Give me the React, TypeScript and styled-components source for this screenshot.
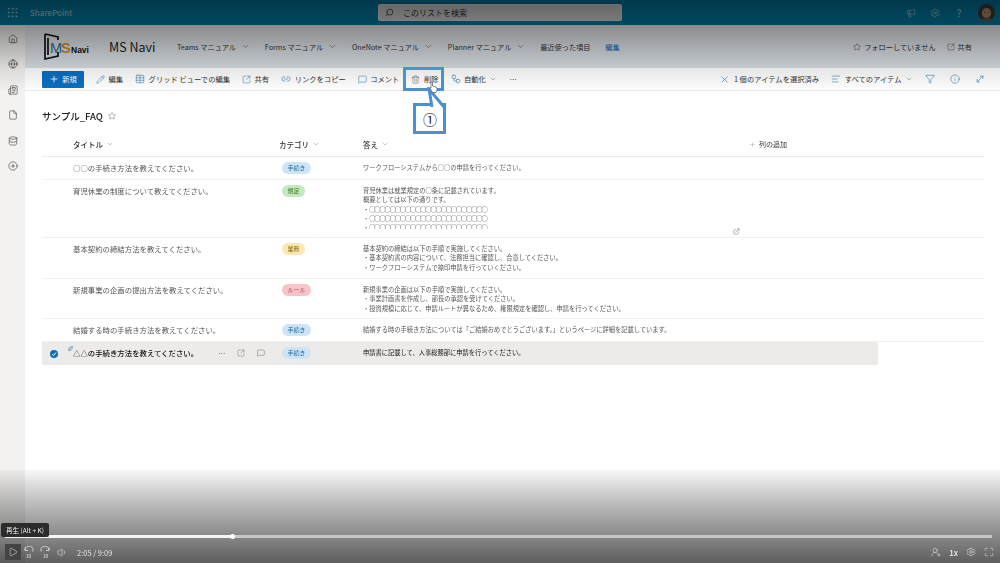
import styled, { createGlobalStyle } from "styled-components";
import {
  AlignLeft,
  ChevronDown,
  CirclePlus,
  Database,
  ExternalLink,
  File,
  Filter,
  Globe,
  Grip,
  Home,
  Info,
  Link2,
  Maximize,
  Megaphone,
  MessageSquare,
  MoveDiagonal,
  Newspaper,
  Pencil,
  Play,
  Plus,
  Search,
  Settings,
  Sparkles,
  SquareArrowOutUpRight,
  Star,
  Table,
  Trash2,
  UserRoundPlus,
  Volume1,
  Workflow,
  X,
} from "lucide-react";
import type { ReactNode } from "react";

const fonts = `"Noto Sans CJK JP", "Noto Sans", "Liberation Sans", sans-serif`;

const GlobalStyle = createGlobalStyle`
  html, body {
    margin: 0;
    width: 1000px;
    height: 563px;
    overflow: hidden;
    background: #fff;
  }
  body {
    font-family: ${fonts};
  }
`;

const Page = styled.div`
  position: relative;
  width: 1000px;
  height: 563px;
  overflow: hidden;
  display: flex;
  flex-direction: column;
  filter: blur(0.3px);
`;

const SuiteBar = styled.header`
  height: 25px;
  flex: none;
  display: flex;
  align-items: center;
  padding: 0 5px 0 6px;
  background: #037ca6;
  color: #b4d6e0;
`;

const BrandName = styled.span`
  margin-left: 11px;
  font-size: 8px;
  font-weight: 500;
  color: #93c8d6;
`;

const SearchBox = styled.div`
  position: absolute;
  left: 378px;
  top: 4px;
  width: 244px;
  height: 17px;
  box-sizing: border-box;
  display: flex;
  align-items: center;
  gap: 9px;
  padding-left: 6px;
  background: #d8d8d8;
  border: 1px solid #e4e4e4;
  border-radius: 2px;
  font-size: 8px;
  color: #333;
`;

const SearchIcon = styled(Search)`
  transform: scaleX(-1);
`;

const SuiteIcons = styled.div`
  margin-left: auto;
  display: flex;
  align-items: center;
  gap: 14px;
`;

const Question = styled.span`
  font-size: 10px;
  width: 10px;
  text-align: center;
`;

const Body = styled.div`
  flex: 1;
  display: flex;
  min-height: 0;
`;

const Rail = styled.nav`
  width: 25px;
  flex: none;
  display: flex;
  flex-direction: column;
  align-items: center;
  gap: 15.6px;
  padding-top: 8.5px;
  background: #f3f2f1;
  color: #444;
`;

const Main = styled.main`
  flex: 1;
  min-width: 0;
`;

const SiteHeader = styled.div`
  height: 43px;
  display: flex;
  align-items: center;
  padding: 0 28px 0 19px;
  background: linear-gradient(#e9ecf0, #dae0e6);
`;

const SiteName = styled.span`
  margin-left: 16px;
  width: 68px;
  font-size: 12.5px;
  color: #222;
`;

const SiteNav = styled.div`
  display: flex;
  align-items: center;
  gap: 14.8px;
  font-size: 7.2px;
  color: #333;
`;

const NavLink = styled.span<{ $accent?: boolean }>`
  display: flex;
  align-items: center;
  gap: 5px;
  white-space: nowrap;
  color: ${(p) => (p.$accent ? "#0f6cbd" : "inherit")};
`;

const SiteActions = styled.div`
  margin-left: auto;
  display: flex;
  align-items: center;
  gap: 11px;
  font-size: 7.2px;
  color: #333;
`;

const SiteAction = styled.span`
  display: flex;
  align-items: center;
  gap: 3px;
`;

const CommandBar = styled.div`
  height: 23px;
  box-sizing: border-box;
  display: flex;
  align-items: center;
  gap: 12px;
  padding: 0 15px 0 17px;
  background: #fff;
  border-bottom: 1px solid #edebe9;
  font-size: 7.3px;
  color: #333;
`;

const NewButton = styled.button`
  width: 42px;
  height: 17px;
  display: flex;
  align-items: center;
  justify-content: center;
  gap: 3px;
  padding: 0;
  border: 0;
  border-radius: 1px;
  background: #0a6fc2;
  color: #fff;
  font: inherit;
`;

const Command = styled.span`
  position: relative;
  display: flex;
  align-items: center;
  gap: 3.5px;
  white-space: nowrap;
  svg {
    color: #1b6fa8;
    flex: none;
  }
`;

const MutedCommand = styled(Command)`
  svg {
    color: #555;
  }
`;

const CommandGroup = styled.div`
  margin-left: auto;
  display: flex;
  align-items: center;
  gap: 12px;
`;

const IconGroup = styled.div`
  display: flex;
  align-items: center;
  gap: 15px;
  color: #1b6fa8;
`;

const Highlight = styled.span`
  position: absolute;
  z-index: 30;
  left: -8px;
  top: -7px;
  width: 41px;
  height: 24px;
  box-sizing: border-box;
  border: 3px solid #4a90d2;
`;

const CalloutTail = styled.svg`
  position: absolute;
  z-index: 31;
  left: 14px;
  top: 13px;
  width: 24px;
  height: 21px;
`;

const CalloutLabel = styled.span`
  position: absolute;
  z-index: 30;
  left: 2px;
  top: 29px;
  width: 33px;
  height: 31px;
  box-sizing: border-box;
  display: flex;
  align-items: center;
  justify-content: center;
  border: 3px solid #4a90d2;
  background: #fff;
  font-size: 14px;
  color: #222;
`;

const Cursor = styled.svg`
  position: absolute;
  z-index: 32;
  left: 18px;
  top: 7px;
  width: 9px;
  height: 12px;
`;

const Content = styled.section`
  padding: 16px 16px 0 17px;
`;

const ListTitle = styled.h1`
  display: flex;
  align-items: center;
  gap: 5px;
  height: 18px;
  margin: 0 0 8px;
  font-size: 9.5px;
  font-weight: 500;
  color: #222;
  svg {
    color: #555;
  }
`;

const HeaderRow = styled.div`
  height: 24px;
  box-sizing: border-box;
  padding-bottom: 1px;
  display: grid;
  grid-template-columns: 31px 206px 84px 386px 1fr;
  align-items: center;
  border-bottom: 1px solid #edebe9;
  font-size: 7.5px;
  font-weight: 500;
  color: #333;
`;

const HeaderCell = styled.span`
  display: flex;
  align-items: center;
  gap: 3px;
  svg {
    color: #777;
  }
`;

const AddColumn = styled(HeaderCell)`
  font-weight: 400;
  font-size: 7px;
`;

const Row = styled.div<{ $height: number; $selected?: boolean }>`
  position: relative;
  height: ${(p) => p.$height}px;
  box-sizing: border-box;
  width: ${(p) => (p.$selected ? "836px" : "100%")};
  display: grid;
  grid-template-columns: 31px 206px 84px 378px;
  border-bottom: 1px solid ${(p) => (p.$selected ? "#ecebe9" : "#f3f2f1")};
  background: ${(p) => (p.$selected ? "#ecebe9" : "transparent")};
  color: ${(p) => (p.$selected ? "#111" : "#555")};
`;

const CheckCell = styled.div`
  display: flex;
  align-items: center;
  justify-content: flex-start;
  padding-left: 8px;
  height: 23px;
`;

const CheckDot = styled.span`
  width: 8px;
  height: 8px;
  border-radius: 50%;
  background: #0f6cbd;
  display: flex;
  align-items: center;
  justify-content: center;
`;

const TitleCell = styled.div<{ $selected?: boolean }>`
  position: relative;
  display: flex;
  align-items: flex-start;
  padding-top: 4.5px;
  font-size: 7.4px;
  line-height: 11px;
  font-weight: ${(p) => (p.$selected ? 500 : 400)};
`;

const Spark = styled.span`
  position: absolute;
  display: flex;
  left: -5px;
  top: 4px;
  color: #1b6fa8;
`;

const RowActions = styled.div`
  position: absolute;
  left: 145px;
  top: 5px;
  display: flex;
  align-items: center;
  gap: 12px;
  color: #555;
`;

const ChipCell = styled.div`
  display: flex;
  align-items: flex-start;
  padding: 5px 0 0 3px;
`;

const Chip = styled.span<{ $bg: string; $fg: string }>`
  height: 12px;
  line-height: 12px;
  padding: 0 5.5px;
  border-radius: 6px;
  font-size: 6px;
  background: ${(p) => p.$bg};
  color: ${(p) => p.$fg};
`;

const AnswerCell = styled.div`
  position: relative;
  margin-top: 5.7px;
  max-height: 43.5px;
  overflow: hidden;
  font-size: 6.25px;
  line-height: 9.4px;
  white-space: pre;
`;

const Circles = styled.span`
  letter-spacing: -1.15px;
`;

const OpenLink = styled.span`
  position: absolute;
  display: flex;
  left: 691px;
  top: 48px;
  color: #888;
`;

const ShadeTop = styled.div`
  position: absolute;
  z-index: 20;
  left: 0;
  right: 0;
  top: 0;
  height: 92px;
  pointer-events: none;
  background: linear-gradient(
    rgba(0, 0, 0, 0.55),
    rgba(0, 0, 0, 0.42) 27%,
    rgba(0, 0, 0, 0.1) 74%,
    rgba(0, 0, 0, 0)
  );
`;

const ShadeBottom = styled.div`
  position: absolute;
  z-index: 20;
  left: 0;
  right: 0;
  bottom: 0;
  height: 93px;
  pointer-events: none;
  background: linear-gradient(
    rgba(0, 0, 0, 0.03),
    rgba(0, 0, 0, 0.24) 32%,
    rgba(0, 0, 0, 0.46) 70%,
    rgba(0, 0, 0, 0.63)
  );
`;

const Player = styled.div`
  position: absolute;
  z-index: 40;
  left: 0;
  right: 0;
  bottom: 0;
  height: 28px;
  color: #e0e0e0;
`;

const Track = styled.div`
  position: absolute;
  left: 5px;
  right: 8px;
  top: 0;
  height: 3px;
  background: #c8c8c8;
`;

const Played = styled.div`
  position: absolute;
  left: 0;
  top: 0;
  height: 100%;
  background: #f4f4f4;
`;

const Thumb = styled.span`
  position: absolute;
  right: -2.5px;
  top: -1px;
  width: 5px;
  height: 5px;
  border-radius: 50%;
  background: #fff;
`;

const Tip = styled.span`
  position: absolute;
  left: 1px;
  top: -12px;
  width: 48px;
  height: 14px;
  display: flex;
  align-items: center;
  justify-content: center;
  border-radius: 2px;
  background: #2b2b2b;
  font-size: 6.5px;
  color: #f0f0f0;
`;

const Controls = styled.div`
  height: 100%;
  box-sizing: border-box;
  display: flex;
  align-items: center;
  padding: 6px 6px 0 5px;
  gap: 6px;
`;

const PlayButton = styled.span`
  width: 16px;
  height: 16px;
  margin-right: -4px;
  display: flex;
  align-items: center;
  justify-content: center;
  background: #444;
`;

const Time = styled.span`
  margin-left: 3px;
  font-size: 7.5px;
`;

const ControlsRight = styled.div`
  margin-left: auto;
  display: flex;
  align-items: center;
  gap: 8px;
  font-size: 7.5px;
  font-weight: 700;
`;

type Item = {
  title: string;
  chip: keyof typeof chips;
  answer: ReactNode;
  height: number;
};

const chips = {
  手続き: { bg: "#cfe4f6", fg: "#1a6a9c" },
  規定: { bg: "#c4e8c0", fg: "#3d7a2a" },
  業務: { bg: "#fde7b0", fg: "#8a6d1a" },
  ルール: { bg: "#f9c3c8", fg: "#a8434d" },
};

const circles = "○".repeat(23);

const items: Item[] = [
  {
    title: "○○の手続き方法を教えてください。",
    chip: "手続き",
    answer: "ワークフローシステムから○○の申請を行ってください。",
    height: 23,
  },
  {
    title: "育児休業の制度について教えてください。",
    chip: "規定",
    answer: (
      <>
        {"育児休業は就業規定の○条に記載されています。\n概要としては以下の通りです。\n"}
        ・<Circles>{circles}</Circles>
        {"\n"}・<Circles>{circles}</Circles>
        {"\n"}・<Circles>{circles}</Circles>
      </>
    ),
    height: 58,
  },
  {
    title: "基本契約の締結方法を教えてください。",
    chip: "業務",
    answer:
      "基本契約の締結は以下の手順で実施してください。\n・基本契約書の内容について、法務担当に確認し、合意してください。\n・ワークフローシステムで捺印申請を行っていください。",
    height: 41,
  },
  {
    title: "新規事業の企画の提出方法を教えてください。",
    chip: "ルール",
    answer:
      "新規事業の企画は以下の手順で実施してください。\n・事業計画書を作成し、部長の承認を受けてください。\n・投資規模に応じて、申請ルートが異なるため、権限規定を確認し、申請を行ってください。",
    height: 40,
  },
  {
    title: "結婚する時の手続き方法を教えてください。",
    chip: "手続き",
    answer:
      "結婚する時の手続き方法については「ご結婚おめでとうございます。」というページに詳細を記載しています。",
    height: 23,
  },
];

function Logo() {
  return (
    <svg width="49" height="29" viewBox="0 0 49 29">
      <path
        d="M1 2 L14 5 V8 M1 2 V27 L14 24 V20 M4 6 V23"
        fill="none"
        stroke="#111"
        strokeWidth="1.7"
      />
      <text x="6" y="21" fontSize="14.5" fontFamily="Liberation Sans" fill="#2a6d94">
        M
      </text>
      <text x="17" y="21" fontSize="14.5" fontWeight="700" fontFamily="Liberation Sans" fill="#d98a2b">
        S
      </text>
      <text x="27" y="21" fontSize="8.5" fontWeight="700" fontFamily="Liberation Sans" fill="#111">
        Navi
      </text>
    </svg>
  );
}

function Avatar() {
  return (
    <svg width="17" height="17" viewBox="0 0 17 17">
      <circle cx="8.5" cy="8.5" r="8.5" fill="#3e3a36" />
      <ellipse cx="8.5" cy="9" rx="4.6" ry="5" fill="#b58f73" />
      <circle cx="6.6" cy="8.5" r="0.6" fill="#332" />
      <circle cx="10.4" cy="8.5" r="0.6" fill="#332" />
      <path d="M3 16 Q8.5 11 14 16 L12 17 H5 Z" fill="#6b5a4c" />
    </svg>
  );
}

// 10 second skip button, the arc flips for forward
function SeekIcon({ forward }: { forward?: boolean }) {
  return (
    <svg width="11" height="12" viewBox="0 0 11 12">
      <g transform={forward ? "translate(11 0) scale(-1 1)" : undefined}>
        <path d="M2 1.5 V4.5 H5 M2.2 4.2 A4 3.6 0 1 1 9.6 5.6" fill="none" stroke="currentColor" strokeWidth="0.8" />
      </g>
      <text x="5.5" y="11.5" fontSize="5" textAnchor="middle" fill="currentColor">
        10
      </text>
    </svg>
  );
}

function ListRow({ item }: { item: Item }) {
  const chip = chips[item.chip];
  return (
    <Row $height={item.height}>
      <span />
      <TitleCell>{item.title}</TitleCell>
      <ChipCell>
        <Chip $bg={chip.bg} $fg={chip.fg}>
          {item.chip}
        </Chip>
      </ChipCell>
      <AnswerCell>{item.answer}</AnswerCell>
      {item.height === 58 && (
        <OpenLink>
          <ExternalLink size={7} />
        </OpenLink>
      )}
    </Row>
  );
}

function App() {
  return (
    <Page>
      <GlobalStyle />
      <SuiteBar>
        <Grip size={13} strokeWidth={1.4} />
        <BrandName>SharePoint</BrandName>
        <SearchBox>
          <SearchIcon size={9} />
          このリストを検索
        </SearchBox>
        <SuiteIcons>
          <Megaphone size={10} strokeWidth={1.4} />
          <Settings size={10} strokeWidth={1.4} />
          <Question>?</Question>
          <Avatar />
        </SuiteIcons>
      </SuiteBar>

      <Body>
        <Rail>
          <Home size={10} strokeWidth={1.5} />
          <Globe size={10} strokeWidth={1.5} />
          <Newspaper size={10} strokeWidth={1.5} />
          <File size={10} strokeWidth={1.5} />
          <Database size={10} strokeWidth={1.5} />
          <CirclePlus size={10} strokeWidth={1.5} />
        </Rail>

        <Main>
          <SiteHeader>
            <Logo />
            <SiteName>MS Navi</SiteName>
            <SiteNav>
              <NavLink>
                Teams マニュアル <ChevronDown size={9} strokeWidth={1.2} />
              </NavLink>
              <NavLink>
                Forms マニュアル <ChevronDown size={9} strokeWidth={1.2} />
              </NavLink>
              <NavLink>
                OneNote マニュアル <ChevronDown size={9} strokeWidth={1.2} />
              </NavLink>
              <NavLink>
                Planner マニュアル <ChevronDown size={9} strokeWidth={1.2} />
              </NavLink>
              <NavLink>最近使った項目</NavLink>
              <NavLink $accent>編集</NavLink>
            </SiteNav>
            <SiteActions>
              <SiteAction>
                <Star size={8} strokeWidth={1.3} />
                フォローしていません
              </SiteAction>
              <SiteAction>
                <SquareArrowOutUpRight size={8} strokeWidth={1.3} />
                共有
              </SiteAction>
            </SiteActions>
          </SiteHeader>

          <CommandBar>
            <NewButton>
              <Plus size={10} />
              新規
            </NewButton>
            <Command>
              <Pencil size={9} strokeWidth={1.3} />
              編集
            </Command>
            <Command>
              <Table size={10} strokeWidth={1.2} />
              グリッド ビューでの編集
            </Command>
            <Command>
              <SquareArrowOutUpRight size={9} strokeWidth={1.3} />
              共有
            </Command>
            <Command>
              <Link2 size={10} strokeWidth={1.3} />
              リンクをコピー
            </Command>
            <Command>
              <MessageSquare size={9} strokeWidth={1.3} />
              コメント
            </Command>
            <MutedCommand>
              <Trash2 size={9} strokeWidth={1.3} />
              削除
              <Highlight />
              <CalloutLabel>①</CalloutLabel>
              <CalloutTail viewBox="0 0 24 21">
                <path d="M4 2 L7 20 H19 Z" fill="#fff" />
                <path d="M7 20 L4 2 L19 20" fill="none" stroke="#4a90d2" strokeWidth="3" />
              </CalloutTail>
              <Cursor viewBox="0 0 9 12">
                <path
                  d="M2 1 Q3 0 3.5 1 V5 L7 6 Q8.5 7 8 9 L7 11.5 H3.5 L1 7.5 Q1 6.5 2 7 V1 Z"
                  fill="#fff"
                  stroke="#555"
                  strokeWidth="0.7"
                />
              </Cursor>
            </MutedCommand>
            <Command>
              <Workflow size={10} strokeWidth={1.3} />
              自動化
              <ChevronDown size={8} strokeWidth={1.2} color="#555" />
            </Command>
            <span>…</span>
            <CommandGroup>
              <Command>
                <X size={11} strokeWidth={1.2} />1 個のアイテムを選択済み
              </Command>
              <Command>
                <AlignLeft size={10} strokeWidth={1.3} />
                すべてのアイテム
                <ChevronDown size={8} strokeWidth={1.2} color="#555" />
              </Command>
              <IconGroup>
                <Filter size={10} strokeWidth={1.3} />
                <Info size={10} strokeWidth={1.3} />
                <MoveDiagonal size={10} strokeWidth={1.3} />
              </IconGroup>
            </CommandGroup>
          </CommandBar>

          <Content>
            <ListTitle>
              サンプル_FAQ
              <Star size={8} strokeWidth={1.3} />
            </ListTitle>
            <HeaderRow>
              <span />
              <HeaderCell>
                タイトル <ChevronDown size={8} strokeWidth={1.2} />
              </HeaderCell>
              <HeaderCell>
                カテゴリ <ChevronDown size={8} strokeWidth={1.2} />
              </HeaderCell>
              <HeaderCell>
                答え <ChevronDown size={8} strokeWidth={1.2} />
              </HeaderCell>
              <AddColumn>
                <Plus size={7} strokeWidth={1} />
                列の追加
              </AddColumn>
            </HeaderRow>
            {items.map((item) => (
              <ListRow key={item.title} item={item} />
            ))}
            <Row $height={23} $selected>
              <CheckCell>
                <CheckDot>
                  <svg width="6" height="6" viewBox="0 0 6 6">
                    <path d="M1 3.2 L2.5 4.6 L5 1.5" fill="none" stroke="#fff" strokeWidth="1" />
                  </svg>
                </CheckDot>
              </CheckCell>
              <TitleCell $selected>
                <Spark>
                  <Sparkles size={5} />
                </Spark>
                △△の手続き方法を教えてください。
                <RowActions>
                  <span>…</span>
                  <SquareArrowOutUpRight size={8} strokeWidth={1.2} />
                  <MessageSquare size={8} strokeWidth={1.2} />
                </RowActions>
              </TitleCell>
              <ChipCell>
                <Chip $bg={chips.手続き.bg} $fg={chips.手続き.fg}>
                  手続き
                </Chip>
              </ChipCell>
              <AnswerCell>申請書に記載して、人事総務部に申請を行ってください。</AnswerCell>
            </Row>
          </Content>
        </Main>
      </Body>

      <ShadeTop />
      <ShadeBottom />

      <Player>
        <Track>
          <Played style={{ width: `${(125 / 549) * 100 + 0.25}%` }}>
            <Thumb />
          </Played>
        </Track>
        <Tip>再生 (Alt + K)</Tip>
        <Controls>
          <PlayButton>
            <Play size={10} strokeWidth={1.4} />
          </PlayButton>
          <SeekIcon />
          <SeekIcon forward />
          <Volume1 size={11} strokeWidth={1.4} />
          <Time>2:05 / 9:09</Time>
          <ControlsRight>
            <UserRoundPlus size={10} strokeWidth={1.4} />
            <span>1x</span>
            <Settings size={10} strokeWidth={1.4} />
            <Maximize size={10} strokeWidth={1.4} />
          </ControlsRight>
        </Controls>
      </Player>
    </Page>
  );
}

export default App;
